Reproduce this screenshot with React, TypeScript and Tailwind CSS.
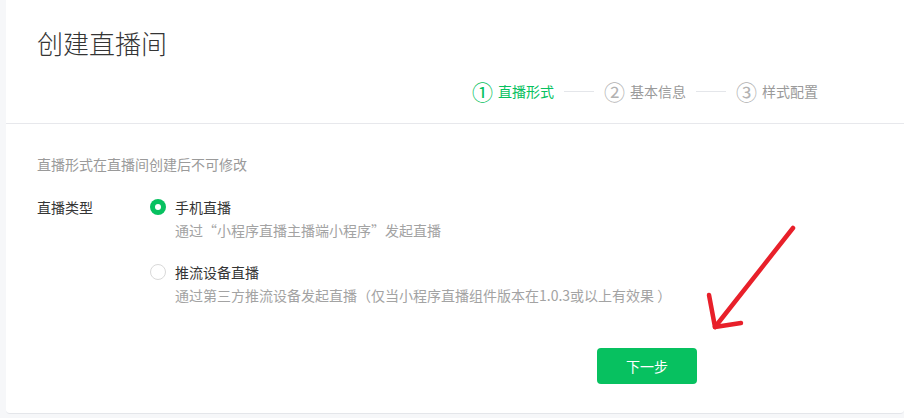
import React from "react";

const FONT = { fontFamily: '"Noto Sans CJK SC", "Noto Sans", sans-serif' };

// ── Steps ─────────────────────────────────────────────────────────────────────

function Step({ num, label, active }: { num: string; label: string; active?: boolean }) {
  return (
    <div className={`flex items-center gap-[5px] ${active ? "text-[#07c160]" : "text-[#9a9a9a]"}`}>
      <span className={`text-[21px] leading-6 ${active ? "" : "text-[#b2b2b2]"}`}>{num}</span>
      <span className="text-[14px] leading-6">{label}</span>
    </div>
  );
}

function StepLine() {
  return <div className="mx-[10px] h-px w-[30px] bg-[#e4e6ea]" />;
}

// ── Radio option ──────────────────────────────────────────────────────────────

function RadioOption({ title, desc, checked }: { title: string; desc: string; checked?: boolean }) {
  return (
    <div className="flex">
      <div className="flex h-5 w-[25px] items-center">
        {checked ? (
          <span className="flex h-4 w-4 items-center justify-center rounded-full bg-[#07c160]">
            <span className="h-[6px] w-[6px] rounded-full bg-white" />
          </span>
        ) : (
          <span className="h-4 w-4 rounded-full border border-[#d9d9d9] bg-white" />
        )}
      </div>
      <div>
        <p className="text-[14px] leading-5 text-[#353535]">{title}</p>
        <p className="mt-[3px] text-[14px] leading-5 text-[#a3a3a3]">{desc}</p>
      </div>
    </div>
  );
}

// ── Page ──────────────────────────────────────────────────────────────────────

export default function App() {
  return (
    <div className="h-[418px] w-[904px] overflow-hidden bg-[#f6f7f9] pl-[6px]" style={FONT}>
      <div className="relative h-[414px] rounded-b-[4px] border-b border-[#e4e6ea] bg-white">
        {/* Header */}
        <div className="border-b border-[#e7e8ec] px-[31px] pb-[20px] pt-[25px]">
          <h1 className="text-[26px] font-light leading-9 text-[#353535]">创建直播间</h1>
          <div className="mt-[18px] flex items-center justify-end pr-[55px]">
            <Step num="①" label="直播形式" active />
            <StepLine />
            <Step num="②" label="基本信息" />
            <StepLine />
            <Step num="③" label="样式配置" />
          </div>
        </div>

        {/* Body */}
        <div className="px-[31px] pt-[30px]">
          <p className="text-[14px] leading-5 text-[#9a9a9a]">直播形式在直播间创建后不可修改</p>

          <div className="mt-[23px] flex">
            <div className="w-[113px] text-[14px] leading-5 text-[#353535]">直播类型</div>
            <div className="flex flex-col gap-[22px]">
              <RadioOption
                checked
                title="手机直播"
                desc="通过“小程序直播主播端小程序”发起直播"
              />
              <RadioOption
                title="推流设备直播"
                desc="通过第三方推流设备发起直播（仅当小程序直播组件版本在1.0.3或以上有效果 ）"
              />
            </div>
          </div>

          <button className="ml-[560px] mt-[43px] h-9 w-[100px] rounded-[4px] bg-[#07c160] text-[14px] text-white">
            下一步
          </button>
        </div>

        {/* Red annotation arrow */}
        <svg
          className="pointer-events-none absolute left-0 top-0"
          width="898"
          height="414"
          viewBox="0 0 898 414"
        >
          <g stroke="#e8202a" strokeWidth="4.5" strokeLinecap="round" strokeLinejoin="round" fill="none">
            <path d="M787 228 L709 327" />
            <path d="M703 295 L709 327 L735 323" />
          </g>
        </svg>
      </div>
    </div>
  );
}
